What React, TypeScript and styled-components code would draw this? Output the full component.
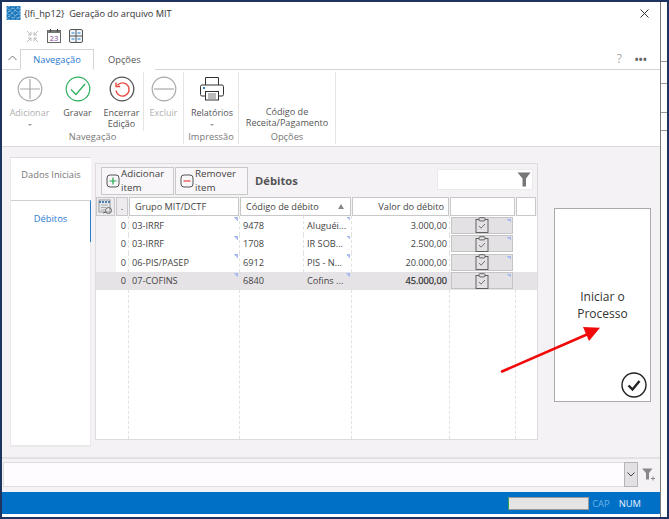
import React from "react";
import styled, { createGlobalStyle } from "styled-components";

const Global = createGlobalStyle`
  html, body { margin: 0; padding: 0; background: #fff; }
  body { width: 669px; height: 519px; overflow: hidden; font-family: "Open Sans", "Noto Sans", sans-serif; color: #444; }
  * { box-sizing: border-box; }
`;

const Frame = styled.div`
  position: relative; width: 669px; height: 519px; display: flex; background: #fff;
  border: 2px solid #1d3461;
`;
const Main = styled.div`
  width: 659px; height: 100%; display: flex; flex-direction: column; flex: none;
  border-right: 1px solid #7a7a7a; padding-bottom: 1px;
`;
const Strip = styled.div`
  flex: 1; display: flex; flex-direction: column; padding-top: 59px;
`;
const Tick = styled.div<{ $h: number }>`
  height: ${p => p.$h}px; border-top: 1px solid #999;
`;

const TitleBar = styled.div`
  height: 22px; display: flex; align-items: center; padding: 0 11px 0 4px; font-size: 9.2px; color: #333; flex: none;
`;
const TitleText = styled.span`margin-left: 3px; white-space: pre;`;
const Spacer = styled.div`flex: 1;`;
const QuickBar = styled.div`
  height: 23px; display: flex; align-items: center; gap: 8px; padding: 1px 0 0 24px; flex: none;
`;
const TabRow = styled.div`
  height: 23px; display: flex; align-items: flex-end; border-bottom: 1px solid #d4d4d4; padding-right: 13px; flex: none;
`;
const Collapse = styled.div`width: 18px; height: 22px; display: flex; align-items: center; justify-content: center; padding-left: 3px;`;
const Tab = styled.div<{ $active?: boolean }>`
  height: 21px; margin-bottom: -1px; padding: 0 13px; display: flex; align-items: center; font-size: 9.3px;
  color: ${p => (p.$active ? "#2a7ad0" : "#555")};
  background: #fff;
  border: 1px solid ${p => (p.$active ? "#d4d4d4" : "transparent")};
  border-bottom-color: ${p => (p.$active ? "#fff" : "transparent")};
  width: ${p => (p.$active ? "74px" : "auto")};
  justify-content: center;
`;
const Help = styled.div`font-size: 12px; color: #aaa; margin-right: 13px; height: 21px; display: flex; align-items: center;`;
const Dots = styled.div`font-size: 10px; font-weight: 700; color: #666; letter-spacing: 0.3px; height: 20px; display:flex; align-items:center;`;

const Ribbon = styled.div`
  height: 77px; display: flex; border-bottom: 1px solid #ddd7dd; padding-top: 2px; flex: none;
`;
const Group = styled.div<{ $w: number }>`
  width: ${p => p.$w}px; height: 72px; display: flex; flex-direction: column; border-right: 1px solid #e4e4e4; flex: none;
`;
const GroupItems = styled.div`flex: 1; display: flex; min-height: 0;`;
const GroupLabel = styled.div`height: 11px; line-height: 11px; text-align: center; font-size: 9.3px; color: #777; margin-bottom: 2px;`;
const RibbonButton = styled.div<{ $w: number; $off?: boolean; $sep?: boolean; $shift?: number }>`
  width: ${p => p.$w}px; display: flex; flex-direction: column; align-items: center; text-align: center;
  font-size: 9px; line-height: 11px; color: ${p => (p.$off ? "#b0b0b0" : "#555")};
  padding: 3px 0 0 ${p => p.$shift ?? 0}px; white-space: pre;
  border-right: ${p => (p.$sep ? "1px solid #e4e4e4" : "none")};
`;
const IconSlot = styled.div`height: 27px; margin-bottom: 5px; display: flex; align-items: center; justify-content: center;`;
const Caret = styled.div`width: 0; height: 0; margin-top: 6px; border: 2px solid transparent; border-top: 2px solid #999;`;
const TextOnly = styled.div`padding-top: 34px; font-size: 9.1px; line-height: 11px; color: #555; text-align: center; width: 100%; white-space: pre;`;

const Content = styled.div`
  flex: 1; background: #f5f2f5; display: flex; padding: 10px 0 10px 8px; min-height: 0; position: relative;
`;
const SideTabs = styled.div`
  width: 81px; height: 290px; background: #fff; display: flex; flex-direction: column; flex: none;
  border: solid #ebe8eb; border-width: 1px 1px 2px 1px; border-top-color: #ddd;
`;
const SideTab = styled.div<{ $active?: boolean }>`
  height: 42px; display: flex; align-items: center; justify-content: center; padding-bottom: ${p => (p.$active ? "6px" : "9px")};
  font-size: 9.3px; color: ${p => (p.$active ? "#2a7ad0" : "#777")};
  background: #fff;
  border-right: ${p => (p.$active ? "1px solid #2a7ad0" : "none")};
  border-top: ${p => (p.$active ? "1px solid #cfcfcf" : "none")};
  margin-right: -1px;
`;
const GridPanel = styled.div`
  width: 443px; height: 277px; margin: 6px 0 0 4px; border: 1px solid #dedade; display: flex; flex-direction: column; flex: none;
`;
const Toolbar = styled.div`
  height: 33px; display: flex; align-items: flex-start; padding: 3px 4px 0 5px; gap: 1px; flex: none;
`;
const ToolButton = styled.div`
  width: 73px; height: 28px; border: 1px solid #c9c9c9; background: #f8f6f8; display: flex; align-items: center; gap: 1px;
  padding-left: 4px; font-size: 9.8px; line-height: 14px; color: #444; white-space: pre;
`;
const GridTitle = styled.div`font-size: 11.2px; font-weight: 700; color: #555; margin: 6px 0 0 6px;`;
const Search = styled.div`
  width: 96px; height: 21px; margin-top: 2px; background: #fff; border: 1px solid #ece9ec; display: flex; align-items: center; justify-content: flex-end; padding-right: 1px;
`;
const GridBody = styled.div`
  flex: 1; background: #fff; display: flex; flex-direction: column; min-height: 0;
`;
const cols = "20px 13px 111px 64px 48px 98px 66px 21px";
const HeaderRow = styled.div`
  display: grid; grid-template-columns: 20px 13px 111px 112px 98px 66px 21px; height: 19px; background: #f5f2f5; flex: none;
`;
const HeadCell = styled.div<{ $right?: boolean; $plain?: boolean }>`
  background: ${p => (p.$plain ? "#eeebee" : "#fff")}; border: 1px solid #c8c8c8;
  margin-right: 1px; font-size: 9.2px; color: #444; display: flex; align-items: center; padding: 0 ${p => (p.$plain ? "0" : "4px")} 0 ${p => (p.$plain ? "0" : "5px")};
  justify-content: ${p => (p.$plain ? "center" : p.$right ? "flex-end" : "flex-start")}; white-space: nowrap;
`;
const Row = styled.div<{ $selected?: boolean }>`
  display: grid; grid-template-columns: ${cols}; height: 18.5px; flex: none; font-size: 9.2px; color: #444;
  background: ${p => (p.$selected ? "#e6e3e6" : "transparent")};
`;
const FillRow = styled.div`display: grid; grid-template-columns: ${cols}; flex: 1; min-height: 0;`;
const Cell = styled.div<{ $align?: string; $grey?: boolean; $noDash?: boolean; $bold?: boolean }>`
  position: relative; display: flex; align-items: center; padding: 0 ${p => (p.$align ? "2px" : "3px")} 0 3px; overflow: hidden; white-space: nowrap;
  justify-content: ${p => p.$align || "flex-start"};
  border-right: ${p => (p.$noDash ? "none" : "1px dashed #e2e2e2")};
  background: ${p => (p.$grey ? "#f5f2f5" : "transparent")};
  color: ${p => (p.$bold ? "#333" : "inherit")};
  -webkit-text-stroke: ${p => (p.$bold ? "0.25px #333" : "0")};
`;
const Corner = styled.span`
  position: absolute; top: 1px; right: 1px; width: 4px; height: 4px;
  background: linear-gradient(45deg, transparent 50%, #a9bcef 50%);
`;
const ClipButton = styled.div`
  position: relative; width: 64px; height: 17px; margin-left: -2px; background: #e4e1e4; border: 1px solid #c4c4c4; display: flex; align-items: center; justify-content: center;
`;

const ProcessCard = styled.div`
  position: relative; width: 97px; height: 194px; margin: 51px 0 0 16px; background: #fff; border: 1px solid #aaa;
  display: flex; align-items: center; justify-content: center; text-align: center; flex: none;
  font-size: 12px; line-height: 17px; color: #333;
`;
const CheckBadge = styled.div`position: absolute; right: 3px; bottom: 3px; line-height: 0;`;
const Arrow = styled.svg`position: absolute; left: 0; top: 0; pointer-events: none;`;

const FilterBar = styled.div`
  height: 35px; background: #f5f2f5; border-top: 2px solid #e3e1e3; display: flex; align-items: center; padding: 0 0 3px 1px; flex: none;
`;
const FilterInput = styled.div`flex: none; width: 621px; height: 25px; background: #fefcfe; border: 1px solid #e0dde0; border-right: none;`;
const FilterDrop = styled.div`
  width: 14px; height: 25px; background: #e2e0e2; border: 1px solid #b5b5b5; display: flex; align-items: center; justify-content: center; flex: none;
`;
const FilterIcon = styled.div`margin-left: 4px; line-height: 0;`;
const StatusBar = styled.div`
  height: 22px; background: #0070c6; display: flex; align-items: center; justify-content: flex-end; padding-right: 19px; flex: none; font-size: 9.4px;
  margin-bottom: 2px;
`;
const Progress = styled.div`width: 81px; height: 13px; background: #e4e4e4; border: 1px solid #9a9a9a; border-left: 1px solid #2fa04f; margin-right: 3px;`;
const Indicator = styled.span<{ $on?: boolean }>`color: ${p => (p.$on ? "#e8f3ff" : "#6fb0e4")}; margin-left: ${p => (p.$on ? "9px" : "0")};`;

const Logo = () => (
  <svg width="15" height="14" viewBox="0 0 14 14">
    <rect x="0" y="0" width="14" height="14" fill="#1c78bd" />
    <path d="M-1 4L4-1M-1 9L9-1M-1 14L14-1M4 15L15 4M9 15L15 9" stroke="#fff" strokeWidth="0.8" strokeDasharray="2.2 1.8" />
    <path d="M-1 10L4 15M-1 5L9 15M-1 0L14 15M4 -1L15 10M9 -1L15 5" stroke="#bfe0f5" strokeWidth="0.8" strokeDasharray="2.2 1.8" />
  </svg>
);
const Compress = () => (
  <svg width="13" height="13" viewBox="0 0 13 13" fill="none" stroke="#bbb" strokeWidth="1">
    <path d="M1 1l4 4M5 2v3H2M12 1L8 5M8 2v3h3M1 12l4-4M5 11V8H2M12 12L8 8M8 11V8h3" />
  </svg>
);
const Calendar = () => (
  <svg width="14" height="14" viewBox="0 0 14 14">
    <rect x="0.5" y="1.5" width="13" height="12" fill="#fff" stroke="#666" />
    <rect x="0.5" y="1.5" width="13" height="2.5" fill="#777" />
    <path d="M3.5 0v3M10.5 0v3" stroke="#444" />
    <text x="7" y="12" textAnchor="middle" fontSize="7.5" fill="#8a3f9c" fontFamily="Open Sans">23</text>
  </svg>
);
const TableIcon = () => (
  <svg width="14" height="14" viewBox="0 0 14 14" fill="none">
    <rect x="0.5" y="0.5" width="13" height="13" rx="1.5" stroke="#555" fill="#eef4fa" />
    <path d="M7 1v12M1 7h12" stroke="#555" />
    <path d="M2.5 4h3M8.5 4h3M2.5 10h3M8.5 10h3" stroke="#2b82c9" />
  </svg>
);
const Chevron = () => (
  <svg width="9" height="6" viewBox="0 0 9 6" fill="none" stroke="#777"><path d="M0.5 5L4.5 1l4 4" /></svg>
);
const Plus = () => (
  <svg width="26" height="26" viewBox="0 0 26 26" fill="none" stroke="#a8a8a8" strokeWidth="1.2">
    <circle cx="13" cy="13" r="11.8" /><path d="M13 3v20M3 13h20" />
  </svg>
);
const Minus = () => (
  <svg width="26" height="26" viewBox="0 0 26 26" fill="none" stroke="#a8a8a8" strokeWidth="1.2">
    <circle cx="13" cy="13" r="11.8" /><path d="M3 13h20" />
  </svg>
);
const Save = () => (
  <svg width="26" height="26" viewBox="0 0 26 26" fill="none">
    <circle cx="13" cy="13" r="11.8" stroke="#2eb05c" strokeWidth="1.2" />
    <path d="M6 13.5l5 5L20 8" stroke="#2eb05c" strokeWidth="1.3" />
  </svg>
);
const Undo = () => (
  <svg width="26" height="26" viewBox="0 0 26 26" fill="none">
    <circle cx="13" cy="13" r="11.8" stroke="#555" strokeWidth="1.3" />
    <path d="M8.5 9.2A6.6 6.6 0 1 1 7 14.5" stroke="#e8483f" strokeWidth="1.4" />
    <path d="M7 6.5v4h4.2" stroke="#e8483f" strokeWidth="1.4" />
  </svg>
);
const Printer = () => (
  <svg width="26" height="26" viewBox="0 0 26 26" fill="none" stroke="#333" strokeWidth="1">
    <path d="M6.5 9V1.5h13V9" />
    <rect x="1.5" y="9" width="23" height="11" rx="1.5" fill="#fff" />
    <rect x="6.5" y="15.5" width="13" height="8.5" fill="#fff" />
    <path d="M9 18h8M9 20h8M9 22h8" stroke="#777" />
    <rect x="4" y="11" width="2" height="2" fill="#2b82c9" stroke="none" />
  </svg>
);
const AddSmall = () => (
  <svg width="14" height="14" viewBox="0 0 14 14" fill="none">
    <rect x="1" y="1" width="12" height="12" rx="3" stroke="#555" />
    <path d="M7 3.5v7M3.5 7h7" stroke="#21a84a" strokeWidth="1.2" />
  </svg>
);
const RemoveSmall = () => (
  <svg width="14" height="14" viewBox="0 0 14 14" fill="none">
    <rect x="1" y="1" width="12" height="12" rx="3" stroke="#555" />
    <path d="M3.5 7h7" stroke="#e5443c" strokeWidth="1.2" />
  </svg>
);
const Funnel = () => (
  <svg width="14" height="15" viewBox="0 0 14 15"><path d="M0.5 0.5h13L9 6.5V14.5H5.5V6.5z" fill="#777" /></svg>
);
const FunnelPlus = () => (
  <svg width="14" height="13" viewBox="0 0 14 13">
    <path d="M0 0.5h10.5L7 5v6.5H4V5z" fill="#888" />
    <path d="M9 10.5h4M11 8.5v4" stroke="#888" />
  </svg>
);
const SheetIcon = () => (
  <svg width="15" height="16" viewBox="0 0 15 16" fill="none">
    <rect x="1" y="1" width="11" height="12" fill="#e6e8ec" stroke="#9a9a9a" />
    <path d="M1 3h11" stroke="#4a7fb5" strokeWidth="2" strokeDasharray="2 1" />
    <path d="M3 6h7M3 8.5h5M3 11h4" stroke="#aaa" />
    <circle cx="10.5" cy="11.5" r="3" stroke="#666" />
    <path d="M5 14l3-1" stroke="#666" />
  </svg>
);
const Clip = () => (
  <svg width="14" height="16" viewBox="0 0 14 16" fill="none" stroke="#555" strokeWidth="0.9">
    <rect x="1" y="2.5" width="12" height="13" />
    <rect x="4" y="0.7" width="6" height="3.2" fill="#e4e1e4" rx="1" />
    <path d="M4 9l2 2.2L10 7" stroke="#666" />
  </svg>
);
const BigCheck = () => (
  <svg width="26" height="26" viewBox="0 0 26 26" fill="none">
    <circle cx="13" cy="13" r="12" stroke="#222" strokeWidth="1.4" />
    <path d="M7.5 13.5l4 4L18.5 9" stroke="#222" strokeWidth="2.4" />
  </svg>
);

const rows = [
  { g: "03-IRRF", c: "9478", d: "Aluguéi...", v: "3.000,00" },
  { g: "03-IRRF", c: "1708", d: "IR SOB...", v: "2.500,00" },
  { g: "06-PIS/PASEP", c: "6912", d: "PIS - N...", v: "20.000,00" },
  { g: "07-COFINS", c: "6840", d: "Cofins ...", v: "45.000,00" },
];

export default function App() {
  return (
    <>
      <Global />
      <Frame>
        <Main>
          <TitleBar>
            <Logo />
            <TitleText>{"{lfi_hp12}  Geração do arquivo MIT"}</TitleText>
            <Spacer />
            <svg width="9" height="9" viewBox="0 0 9 9" stroke="#333" fill="none"><path d="M0.5 0.5l8 8M8.5 0.5l-8 8" /></svg>
          </TitleBar>
          <QuickBar>
            <Compress />
            <Calendar />
            <TableIcon />
          </QuickBar>
          <TabRow>
            <Collapse><Chevron /></Collapse>
            <Tab $active>Navegação</Tab>
            <Tab>Opções</Tab>
            <Spacer />
            <Help>?</Help>
            <Dots>•••</Dots>
          </TabRow>
          <Ribbon>
            <Group $w={182}>
              <GroupItems>
                <RibbonButton $w={55} $off><IconSlot><Plus /></IconSlot>Adicionar<Caret /></RibbonButton>
                <RibbonButton $w={41}><IconSlot><Save /></IconSlot>Gravar</RibbonButton>
                <RibbonButton $w={46} $sep $shift={2}><IconSlot><Undo /></IconSlot>{"Encerrar\nEdição"}</RibbonButton>
                <RibbonButton $w={39} $off><IconSlot><Minus /></IconSlot>Excluir</RibbonButton>
              </GroupItems>
              <GroupLabel>Navegação</GroupLabel>
            </Group>
            <Group $w={55}>
              <GroupItems>
                <RibbonButton $w={54} $shift={2}><IconSlot><Printer /></IconSlot>Relatórios<Caret /></RibbonButton>
              </GroupItems>
              <GroupLabel>Impressão</GroupLabel>
            </Group>
            <Group $w={97}>
              <GroupItems>
                <TextOnly>{"Código de\nReceita/Pagamento"}</TextOnly>
              </GroupItems>
              <GroupLabel>Opções</GroupLabel>
            </Group>
          </Ribbon>
          <Content>
            <SideTabs>
              <SideTab>Dados Iniciais</SideTab>
              <SideTab $active>Débitos</SideTab>
            </SideTabs>
            <GridPanel>
              <Toolbar>
                <ToolButton><AddSmall />{"Adicionar\nitem"}</ToolButton>
                <ToolButton><RemoveSmall />{"Remover\nitem"}</ToolButton>
                <GridTitle>Débitos</GridTitle>
                <Spacer />
                <Search><Funnel /></Search>
              </Toolbar>
              <GridBody>
                <HeaderRow>
                  <HeadCell $plain><SheetIcon /></HeadCell>
                  <HeadCell $plain>.</HeadCell>
                  <HeadCell>Grupo MIT/DCTF</HeadCell>
                  <HeadCell>Código de débito<Spacer /><svg width="6" height="5" viewBox="0 0 6 5"><path d="M3 0l3 5H0z" fill="#888" /></svg><span>&nbsp;</span></HeadCell>
                  <HeadCell $right>Valor do débito</HeadCell>
                  <HeadCell />
                  <HeadCell />
                </HeaderRow>
                {rows.map((r, i) => (
                  <Row key={r.c} $selected={i === 3}>
                    <Cell $grey={i !== 3} $noDash />
                    <Cell $align="flex-end">0</Cell>
                    <Cell>{r.g}<Corner /></Cell>
                    <Cell>{r.c}</Cell>
                    <Cell>{r.d}<Corner /></Cell>
                    <Cell $align="flex-end" $bold={i === 3}>{r.v}</Cell>
                    <Cell $noDash><ClipButton><Clip /><Corner /></ClipButton></Cell>
                    <Cell $noDash />
                  </Row>
                ))}
                <FillRow>
                  <Cell $noDash />
                  <Cell />
                  <Cell />
                  <Cell $noDash />
                  <Cell />
                  <Cell />
                  <Cell />
                  <Cell $noDash />
                </FillRow>
              </GridBody>
            </GridPanel>
            <ProcessCard>
              <span>Iniciar o<br />Processo</span>
              <CheckBadge><BigCheck /></CheckBadge>
            </ProcessCard>
          </Content>
          <FilterBar>
            <FilterInput />
            <FilterDrop>
              <svg width="8" height="5" viewBox="0 0 8 5" fill="none" stroke="#444"><path d="M0.5 0.5L4 4l3.5-3.5" /></svg>
            </FilterDrop>
            <FilterIcon><FunnelPlus /></FilterIcon>
          </FilterBar>
          <StatusBar>
            <Progress />
            <Indicator>CAP</Indicator>
            <Indicator $on>NUM</Indicator>
          </StatusBar>
        </Main>
        <Strip>
          <Tick $h={22} />
          <Tick $h={29} />
          <Tick $h={18} />
          <Tick $h={1} />
        </Strip>
        <Arrow width="669" height="519" viewBox="0 0 669 519">
          <path d="M500 369.5L586 332" stroke="#f00a0a" strokeWidth="2.6" strokeLinecap="round" />
          <path d="M598 325.8L581 325L587 339z" fill="#f00a0a" />
        </Arrow>
      </Frame>
    </>
  );
}
